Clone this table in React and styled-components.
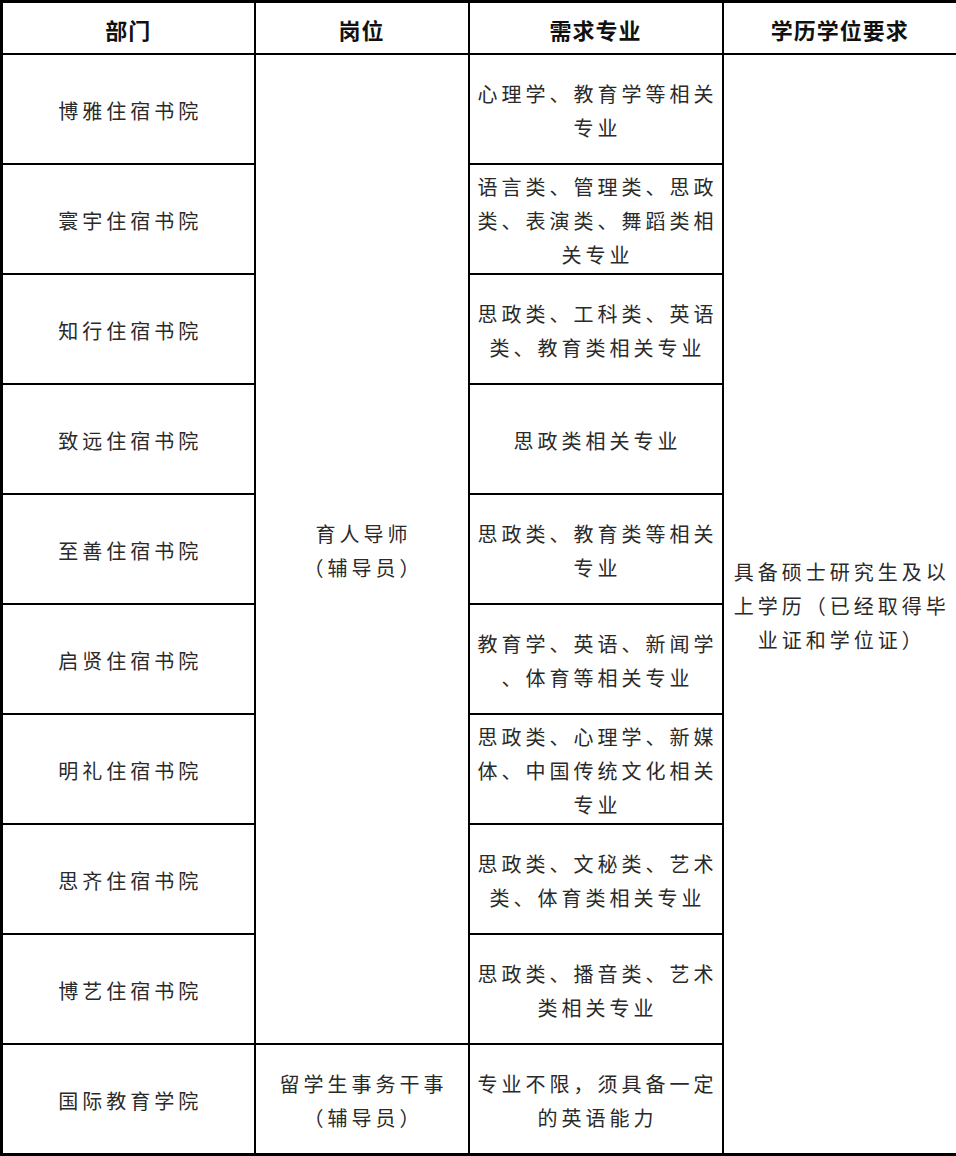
import React from "react";
import styled, { createGlobalStyle } from "styled-components";

const GlobalStyle = createGlobalStyle`
  html, body {
    margin: 0;
    padding: 0;
    background: #fff;
  }
  body {
    font-family: "Noto Sans CJK SC", "Noto Sans", sans-serif;
    color: #222;
  }
`;

const Table = styled.table`
  width: 956px;
  height: 1156px;
  border-collapse: collapse;
  table-layout: fixed;
  border: 3px solid #000;
  background: #fff;
`;

const HeadCell = styled.th`
  height: 48px;
  border: 2px solid #000;
  font-size: 22px;
  font-weight: 700;
  letter-spacing: 1px;
  color: #111;
  text-align: center;
  vertical-align: middle;
  padding: 2px 0 0;
`;

const Cell = styled.td`
  height: 105px;
  border: 2px solid #000;
  font-size: 20px;
  font-weight: 400;
  line-height: 34px;
  letter-spacing: 4px;
  color: #2a2a2a;
  text-align: center;
  vertical-align: middle;
  padding: 3px 0 0 4px;
  white-space: nowrap;
`;

const Line = styled.div`
  white-space: nowrap;
`;

const rows = [
  { dept: "博雅住宿书院", major: ["心理学、教育学等相关", "专业"] },
  { dept: "寰宇住宿书院", major: ["语言类、管理类、思政", "类、表演类、舞蹈类相", "关专业"] },
  { dept: "知行住宿书院", major: ["思政类、工科类、英语", "类、教育类相关专业"] },
  { dept: "致远住宿书院", major: ["思政类相关专业"] },
  { dept: "至善住宿书院", major: ["思政类、教育类等相关", "专业"] },
  { dept: "启贤住宿书院", major: ["教育学、英语、新闻学", "、体育等相关专业"] },
  { dept: "明礼住宿书院", major: ["思政类、心理学、新媒", "体、中国传统文化相关", "专业"] },
  { dept: "思齐住宿书院", major: ["思政类、文秘类、艺术", "类、体育类相关专业"] },
  { dept: "博艺住宿书院", major: ["思政类、播音类、艺术", "类相关专业"] },
];

const Lines = ({ items }) => items.map((t, i) => <Line key={i}>{t}</Line>);

export default function App() {
  return (
    <>
      <GlobalStyle />
      <Table>
        <colgroup>
          <col style={{ width: 253 }} />
          <col style={{ width: 214 }} />
          <col style={{ width: 254 }} />
          <col style={{ width: 235 }} />
        </colgroup>
        <thead>
          <tr>
            <HeadCell>部门</HeadCell>
            <HeadCell>岗位</HeadCell>
            <HeadCell>需求专业</HeadCell>
            <HeadCell>学历学位要求</HeadCell>
          </tr>
        </thead>
        <tbody>
          {rows.map((r, i) => (
            <tr key={r.dept}>
              <Cell>{r.dept}</Cell>
              {i === 0 && (
                <Cell rowSpan={9}>
                  <Lines items={["育人导师", "（辅导员）"]} />
                </Cell>
              )}
              <Cell>
                <Lines items={r.major} />
              </Cell>
              {i === 0 && (
                <Cell rowSpan={10}>
                  <Lines
                    items={[
                      "具备硕士研究生及以",
                      "上学历（已经取得毕",
                      "业证和学位证）",
                    ]}
                  />
                </Cell>
              )}
            </tr>
          ))}
          <tr>
            <Cell>国际教育学院</Cell>
            <Cell>
              <Lines items={["留学生事务干事", "（辅导员）"]} />
            </Cell>
            <Cell>
              <Lines items={["专业不限，须具备一定", "的英语能力"]} />
            </Cell>
          </tr>
        </tbody>
      </Table>
    </>
  );
}
